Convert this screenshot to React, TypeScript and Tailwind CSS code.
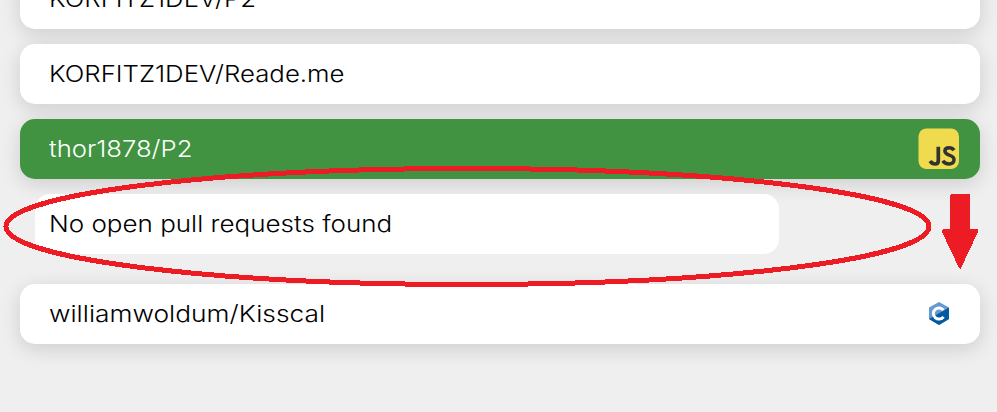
import type { ReactNode } from "react";

type RowProps = { name: string; text?: string; active?: boolean; children?: ReactNode };

function RepoRow({ name, text = "", active = false, children }: RowProps) {
  return (
    <div
      className={`flex h-[60px] shrink-0 items-center justify-between rounded-[15px] pl-[29px] shadow-[0_5px_20px_rgba(0,0,0,0.14)] ${
        active ? "bg-[#419342] text-white" : "bg-white text-black"
      }`}
    >
      <span className={`origin-left whitespace-nowrap ${text}`}>{name}</span>
      {children}
    </div>
  );
}

function JsIcon() {
  return (
    <svg className="mr-5 h-[42px] w-[42px]" viewBox="0 0 42 42" fill="none">
      <rect x="0.5" y="0.5" width="40.5" height="40.5" rx="8" fill="#f0db4f" />
      <path d="M20.3 18.8V32.5Q20.3 36 17.2 36Q14 36 12.1 33" stroke="#323330" strokeWidth="3.7" />
      <path d="M36 22.2Q34.3 19.7 31.2 19.7Q26.9 19.7 26.9 23C26.9 28.3 36 25.8 36 31.6Q36 36 31 36Q26.9 36 24.8 32.7" stroke="#323330" strokeWidth="3.5" />
    </svg>
  );
}

function CIcon() {
  return (
    <svg className="mr-[31.5px] mb-px h-[23px] w-5" viewBox="0 0 20 23">
      <path d="M10 0 20 5.6V17L10 23 0 17V5.6Z" fill="#659ad2" />
      <path d="M20 5.6V17L10 23 0 17Z" fill="#035a9e" />
      <path d="M14.5 8.2A5.6 5.6 0 1 0 14.5 14.8" fill="none" stroke="#fff" strokeWidth="3" />
    </svg>
  );
}

export default function App() {
  return (
    <main className="relative h-[412px] w-[997px] overflow-hidden bg-[#efefef] font-['Inter',sans-serif] text-[23px] font-light">
      <div className="-mt-[31px] flex flex-col gap-[15px] pr-[17px] pl-5">
        <RepoRow name="KORFITZ1DEV/P2" text="scale-x-[1.12]" />
        <RepoRow name="KORFITZ1DEV/Reade.me" text="scale-x-[1.12]" />
        <RepoRow name="thor1878/P2" text="scale-x-[1.115]" active>
          <JsIcon />
        </RepoRow>
        <div className="mb-[15px] ml-[15px] flex h-[60px] w-[744px] items-center rounded-[15px] bg-white pl-[14px] text-black">
          <span className="origin-left scale-x-[1.13] whitespace-nowrap">No open pull requests found</span>
        </div>
        <RepoRow name="williamwoldum/Kisscal" text="scale-x-[1.145]">
          <CIcon />
        </RepoRow>
      </div>
      <svg className="pointer-events-none absolute inset-0 h-full w-full" viewBox="0 0 997 412" shapeRendering="crispEdges">
        <ellipse cx="467.5" cy="226.5" rx="461.5" ry="58" fill="none" stroke="#ed1c24" strokeWidth="5" />
        <path d="M951 194H969L970 195V229H977L978 230V232L961 268L960 269L959 268L942 232V230L943 229H950V195Z" fill="#ed1c24" />
      </svg>
    </main>
  );
}
